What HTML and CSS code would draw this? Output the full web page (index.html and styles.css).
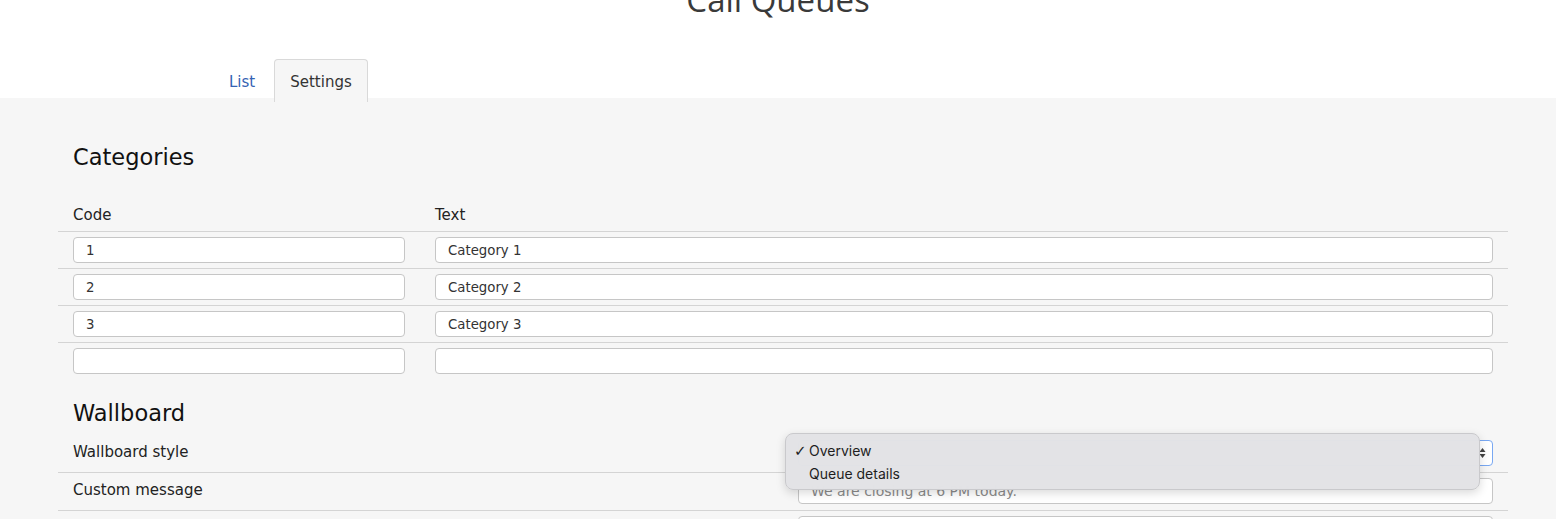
FILE: index.html
```html
<!DOCTYPE html>
<html>
<head>
<meta charset="utf-8">
<title>Call Queues</title>
<link rel="stylesheet" href="styles.css">
</head>
<body>
<header class="top">
  <h1 class="title">Call Queues</h1>
  <nav class="tabs">
    <a class="tab-link" href="#">List</a>
    <span class="tab active">Settings</span>
  </nav>
</header>
<main class="content">
  <h2 class="section-title">Categories</h2>
  <table class="cat-table">
    <thead>
      <tr><th class="col-code">Code</th><th>Text</th></tr>
    </thead>
    <tbody>
      <tr><td class="col-code"><input class="field" value="1"></td><td><input class="field" value="Category 1"></td></tr>
      <tr><td class="col-code"><input class="field" value="2"></td><td><input class="field" value="Category 2"></td></tr>
      <tr><td class="col-code"><input class="field" value="3"></td><td><input class="field" value="Category 3"></td></tr>
      <tr><td class="col-code"><input class="field" value=""></td><td><input class="field" value=""></td></tr>
    </tbody>
  </table>
  <h2 class="section-title wall">Wallboard</h2>
  <div class="form-rows">
    <div class="form-row">
      <div class="label">Wallboard style</div>
      <div class="value">
        <div class="select"><span class="sel-text"></span><span class="arrows">
          <svg width="7" height="12" viewBox="0 0 7 12"><path d="M3.5 1 L6.5 5 L0.5 5 Z M3.5 11 L6.5 7 L0.5 7 Z" fill="#444"/></svg>
        </span></div>
        <div class="menu">
          <div class="menu-item checked"><span class="check">✓</span>Overview</div>
          <div class="menu-item"><span class="check"></span>Queue details</div>
        </div>
      </div>
    </div>
    <div class="form-row">
      <div class="label">Custom message</div>
      <div class="value"><input class="field" placeholder="We are closing at 6 PM today."></div>
    </div>
    <div class="form-row">
      <div class="label"></div>
      <div class="value"><input class="field"></div>
    </div>
  </div>
</main>
</body>
</html>
```
FILE: styles.css
```css
* { box-sizing: border-box; }
html, body { margin: 0; padding: 0; }
body {
  font-family: "DejaVu Sans", "Liberation Sans", sans-serif;
  color: #222;
  background: #f6f6f6;
  overflow: hidden;
}
.top {
  background: #fff;
  height: 98px;
  display: flex;
  flex-direction: column;
  position: relative;
  z-index: 2;
}
.title {
  margin: -20px 0 0 0;
  font-family: "Open Sans", sans-serif;
  font-weight: 400;
  font-size: 33px;
  line-height: 40px;
  color: #3a3a3a;
  text-align: center;
}
.tabs {
  margin-top: auto;
  display: flex;
  align-items: flex-end;
  padding-left: 214px;
  gap: 4px;
  margin-bottom: -4px;
}
.tab-link, .tab {
  font-size: 15px;
  line-height: 20px;
  padding: 12px 15px 11px;
  text-decoration: none;
}
.tab-link {
  color: #3563b3;
  padding-bottom: 10px;
}
.tab {
  color: #333;
  background: #f6f6f6;
  border: 1px solid #d9d9d9;
  border-bottom: none;
  border-radius: 4px 4px 0 0;
  height: 43px;
}
.content {
  padding: 44px 48px 0 58px;
}
.section-title {
  margin: 0;
  padding: 0 15px;
  font-size: 22.5px;
  font-weight: 400;
  line-height: 30px;
  color: #111;
}
.cat-table {
  width: 100%;
  border-collapse: collapse;
  margin-top: 33px;
}
.cat-table th {
  text-align: left;
  font-weight: 400;
  font-size: 15px;
  line-height: 20px;
  padding: 0 15px 6px;
  color: #222;
}
.cat-table .col-code { width: 362px; }
.cat-table td {
  border-top: 1px solid #d4d4d4;
  padding: 5px 15px;
}
.field {
  display: block;
  width: 100%;
  height: 26px;
  border: 1px solid #c6c6c6;
  border-radius: 4px;
  background: #fff;
  font-family: "DejaVu Sans", sans-serif;
  font-size: 13.3px;
  color: #333;
  padding: 0 12px;
  outline: none;
}
.field::placeholder { color: #8a8a8a; font-size: 14px; }
.wall { margin-top: 19px; margin-bottom: 7px; }
.form-row {
  display: grid;
  grid-template-columns: 1fr 1fr;
  border-bottom: 1px solid #d4d4d4;
}
.label {
  padding: 5px 15px 6px;
  font-size: 15px;
  line-height: 25px;
  color: #222;
}
.value {
  padding: 5px 15px 6px;
  position: relative;
}
.select {
  height: 26px;
  border: 1.5px solid #79a8f2;
  border-radius: 4px;
  background: #fff;
  display: flex;
  align-items: center;
  justify-content: space-between;
  padding: 0 6px 0 12px;
  font-size: 13px;
}
.arrows { display: flex; align-items: center; }
.menu {
  position: absolute;
  left: 2px;
  top: -2px;
  width: calc(100% - 30px);
  height: 57px;
  background: rgba(227, 227, 230, 0.99);
  border: 1px solid #c9c9cc;
  border-radius: 8px;
  box-shadow: 0 3px 10px rgba(0,0,0,0.15);
  padding: 5px 0 0 8px;
  font-family: "Inter", "Noto Sans", sans-serif;
  font-size: 14px;
  color: #1e1e1e;
  z-index: 5;
}
.menu-item {
  display: flex;
  align-items: center;
  height: 23px;
}
.check {
  width: 15px;
  font-size: 15px;
  font-weight: 700;
  font-family: "DejaVu Sans", sans-serif;
}
```
